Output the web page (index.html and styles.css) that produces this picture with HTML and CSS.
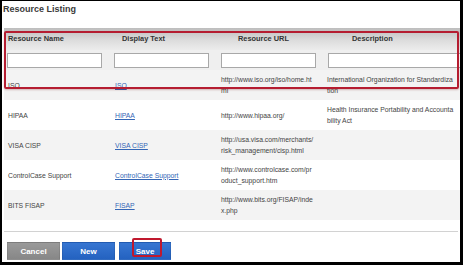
FILE: index.html
```html
<!DOCTYPE html>
<html lang="en">
<head>
    <meta charset="UTF-8">
    <title>Resource Listing</title>
    <link rel="stylesheet" href="styles.css">
</head>
<body>
    <div class="frame">
        <div class="title">Resource Listing</div>

        <table class="listing">
            <colgroup>
                <col class="c-name">
                <col class="c-text">
                <col class="c-url">
                <col class="c-desc">
            </colgroup>
            <thead>
                <tr class="head-row">
                    <th class="h-name">Resource Name</th>
                    <th class="h-text">Display Text</th>
                    <th class="h-url">Resource URL</th>
                    <th class="h-desc">Description</th>
                </tr>
                <tr class="filter-row">
                    <td><input type="text" class="filter"></td>
                    <td><input type="text" class="filter"></td>
                    <td><input type="text" class="filter"></td>
                    <td><input type="text" class="filter wide"></td>
                </tr>
            </thead>
            <tbody>
                <tr class="alt">
                    <td>ISO</td>
                    <td><a href="#">ISO</a></td>
                    <td class="url">http://www.iso.org/iso/home.html</td>
                    <td class="desc">International Organization for Standardization</td>
                </tr>
                <tr>
                    <td>HIPAA</td>
                    <td><a href="#">HIPAA</a></td>
                    <td class="url">http://www.hipaa.org/</td>
                    <td class="desc">Health Insurance Portability and Accountability Act</td>
                </tr>
                <tr class="alt">
                    <td>VISA CISP</td>
                    <td><a href="#">VISA CISP</a></td>
                    <td class="url">http://usa.visa.com/merchants/risk_management/cisp.html</td>
                    <td class="desc"></td>
                </tr>
                <tr>
                    <td>ControlCase Support</td>
                    <td><a href="#">ControlCase Support</a></td>
                    <td class="url">http://www.controlcase.com/product_support.htm</td>
                    <td class="desc"></td>
                </tr>
                <tr class="alt">
                    <td>BITS FISAP</td>
                    <td><a href="#">FISAP</a></td>
                    <td class="url">http://www.bits.org/FISAP/index.php</td>
                    <td class="desc"></td>
                </tr>
            </tbody>
        </table>

        <div class="divider"></div>

        <div class="actions">
            <button type="button" class="btn btn-grey">Cancel</button>
            <button type="button" class="btn btn-blue">New</button>
            <button type="button" class="btn btn-blue save">Save</button>
        </div>

        <!-- red annotation marks -->
        <div class="mark mark-filters"></div>
        <div class="mark mark-save"></div>
    </div>
</body>
</html>
```

FILE: styles.css
```css
body {
    margin: 0;
    padding: 0;
    background: #000;
    font-family: "Liberation Sans", Arial, sans-serif;
    color: #444;
}

.frame {
    position: relative;
    margin: 1px 3px 0 2px;
    height: 261px;
    background: #fff;
    overflow: hidden;
}

.title {
    height: 24px;
    padding: 3px 0 0 1px;
    font-size: 9px;
    line-height: 11px;
    font-weight: bold;
    color: #3a3a3a;
}

.listing {
    margin-left: 2px;
    width: 462px;
    table-layout: fixed;
    border-collapse: collapse;
    font-size: 6.8px;
}

.c-name { width: 107px; }
.c-text { width: 107px; }
.c-url { width: 105px; }
.c-desc { width: 143px; }

.listing th,
.listing td {
    padding: 0 0 0 4px;
    vertical-align: middle;
}

.head-row {
    height: 22px;
    background: linear-gradient(#bdbdbd, #dcdcdc 55%, #ececec);
}

.head-row th {
    text-align: left;
    font-size: 7.4px;
    font-weight: bold;
    color: #333;
    padding-bottom: 2px;
}

.listing .h-text { padding-left: 11px; }
.listing .h-url { padding-left: 20px; }
.listing .h-desc { padding-left: 29px; }

.filter-row {
    height: 20px;
    background: #efefef;
}

.filter-row td {
    padding-left: 3px;
}

.filter {
    display: block;
    box-sizing: border-box;
    width: 95px;
    height: 15px;
    margin: 0;
    border: 1px solid #a8a8a8;
    background: #fff;
}

.filter.wide {
    width: 140px;
    margin-left: 2px;
}

.listing tbody tr {
    height: 30px;
    background: #fff;
}

.listing tbody tr.alt {
    background: #f3f3f3;
}

.listing tbody td {
    line-height: 11px;
}

.listing td.url {
    padding-left: 3px;
    padding-right: 8px;
    word-break: break-all;
}

.listing td.desc {
    padding-right: 12px;
    word-break: break-all;
}

.listing a {
    color: #3466b6;
    text-decoration: underline;
}

.divider {
    margin: 11px 2px 0 2px;
    height: 1px;
    background: #d2d2d2;
}

.actions {
    display: flex;
    gap: 2px;
    padding: 10px 0 0 5px;
}

.btn {
    width: 53px;
    height: 18px;
    padding: 0;
    border: 1px solid rgba(0, 0, 0, 0.08);
    font-family: "Liberation Sans", Arial, sans-serif;
    font-size: 8px;
    font-weight: bold;
    color: #fff;
}

.btn-grey {
    background: linear-gradient(#9a9a9a, #878787);
}

.btn-blue {
    background: linear-gradient(#3776d2, #2462c0);
}

.btn.save {
    width: 52px;
    margin-left: 2px;
}

.mark {
    position: absolute;
    border: 2px solid #b51d31;
    border-radius: 2px;
    box-sizing: border-box;
}

.mark-filters {
    left: 2px;
    top: 30px;
    width: 455px;
    height: 58px;
    box-shadow: 0 1px 2px rgba(120, 0, 0, 0.25);
}

.mark-save {
    left: 130px;
    top: 237px;
    width: 30px;
    height: 19px;
    border-color: #c0192e;
}
```
